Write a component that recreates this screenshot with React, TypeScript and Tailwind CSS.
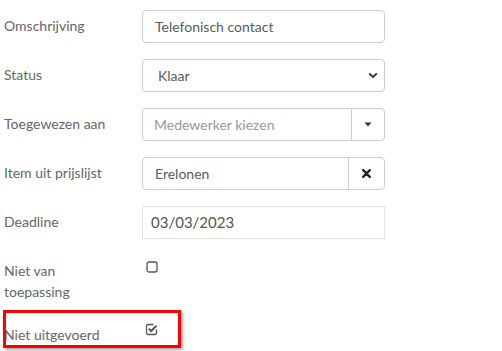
import React from 'react'

const font = { fontFamily: 'Lato, "Open Sans", sans-serif' }

function Row({ label, children, className = '' }: { label: React.ReactNode; children: React.ReactNode; className?: string }) {
  return (
    <div className={`flex ${className}`}>
      <div className="w-[142px] shrink-0 pl-[4px] pt-[5px] text-[14px] leading-[21px] text-[#666]">{label}</div>
      <div className="w-[243px]">{children}</div>
    </div>
  )
}

function SquareIcon() {
  return (
    <svg width="12" height="12" viewBox="0 0 12 12" className="block">
      <rect x="1" y="1" width="10" height="10" rx="2" fill="none" stroke="#555" strokeWidth="1.3" />
    </svg>
  )
}

function CheckSquareIcon() {
  return (
    <svg width="13" height="13" viewBox="0 0 13 13" className="block">
      <path d="M8.5 1.5 H3.2 A1.7 1.7 0 0 0 1.5 3.2 V9.8 A1.7 1.7 0 0 0 3.2 11.5 H9.8 A1.7 1.7 0 0 0 11.5 9.8 V6.5" fill="none" stroke="#555" strokeWidth="1.3" />
      <path d="M3.8 5.8 L6.1 8 L11.5 2.8" fill="none" stroke="#555" strokeWidth="2" />
    </svg>
  )
}

export default function App() {
  return (
    <div className="relative w-[502px] h-[351px] bg-white pt-[10px]" style={font}>
      <Row label="Omschrijving">
        <div className="h-[33px] rounded-[4px] border border-[#ccc] px-[12px] text-[14px] leading-[31px] text-[#5a5a5a]">Telefonisch contact</div>
      </Row>

      <Row label="Status" className="mt-[16px]">
        <div className="h-[33px] rounded-[4px] border border-[#ccc] pl-[15px] pr-[6px] flex items-center justify-between text-[14px] text-[#5a5a5a]">
          <span>Klaar</span>
          <svg width="10" height="7" viewBox="0 0 10 7">
            <path d="M1.2 1.5 L5 5 L8.8 1.5" fill="none" stroke="#333" strokeWidth="1.8" />
          </svg>
        </div>
      </Row>

      <Row label="Toegewezen aan" className="mt-[16px]">
        <div className="h-[33px] rounded-[4px] border border-[#ccc] flex text-[14px]">
          <div className="flex-1 px-[11px] leading-[31px] text-[#999]">Medewerker kiezen</div>
          <div className="w-[33px] border-l border-[#ccc] flex items-center justify-center">
            <svg width="8" height="5" viewBox="0 0 8 5">
              <path d="M0.5 0.5 H7.5 L4 4.5 Z" fill="#333" />
            </svg>
          </div>
        </div>
      </Row>

      <Row label="Item uit prijslijst" className="mt-[16px]">
        <div className="h-[33px] rounded-[4px] border border-[#ccc] flex text-[14px]">
          <div className="flex-1 px-[12px] leading-[31px] text-[#5a5a5a]">Erelonen</div>
          <div className="w-[36px] border-l border-[#ccc] flex items-center justify-center">
            <svg width="9" height="9" viewBox="0 0 9 9">
              <path d="M1.2 1.2 L7.8 7.8 M7.8 1.2 L1.2 7.8" stroke="#222" strokeWidth="2.4" strokeLinecap="round" />
            </svg>
          </div>
        </div>
      </Row>

      <Row label="Deadline" className="mt-[16px]">
        <div className="h-[33px] border border-[#e3e3e3] px-[8px] text-[15px] leading-[31px] text-[#555]">03/03/2023</div>
      </Row>

      <Row label={<>Niet van<br />toepassing</>} className="mt-[16px]">
        <div className="pt-[6px] pl-[4px]">
          <SquareIcon />
        </div>
      </Row>

      <Row label="Niet uitgevoerd" className="mt-[17px]">
        <div className="pt-[4px] pl-[3px]">
          <CheckSquareIcon />
        </div>
      </Row>

      <div className="absolute left-[3px] top-[310px] w-[178px] h-[38px] border-[3px] border-[#ff0000] shadow-[2px_2px_3px_rgba(0,0,0,0.35)]" />
    </div>
  )
}
